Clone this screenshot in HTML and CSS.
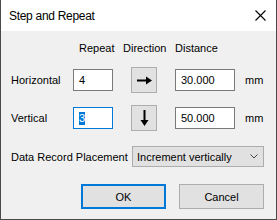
FILE: index.html
```html
<!DOCTYPE html>
<html>
<head>
<meta charset="utf-8">
<link rel="stylesheet" href="styles.css">
</head>
<body>
<div class="window">
  <div class="titlebar">
    <span class="title">Step and Repeat</span>
    <svg class="close" width="11" height="11" viewBox="0 0 11 11"><path d="M0.5 0.5L10.5 10.5M10.5 0.5L0.5 10.5" stroke="#000" stroke-width="1.1" fill="none"/></svg>
  </div>
  <div class="content">
    <div class="grid">
      <span></span>
      <span class="hdr hdr-repeat">Repeat</span>
      <span class="hdr hdr-dir">Direction</span>
      <span class="hdr">Distance</span>
      <span></span>

      <span class="label">Horizontal</span>
      <div class="field"><span>4</span></div>
      <div class="dirbtn"><svg width="15" height="9" viewBox="0 0 15 9"><path d="M0 3.5H9V0.5L15 4.5L9 8.5V5.5H0Z" fill="#000"/></svg></div>
      <div class="field wide"><span>30.000</span></div>
      <span class="unit">mm</span>

      <span class="label">Vertical</span>
      <div class="field focus"><span class="sel">3</span></div>
      <div class="dirbtn"><svg width="9" height="16" viewBox="0 0 9 16"><path d="M3.5 0V10H0.5L4.5 16L8.5 10H5.5V0Z" fill="#000"/></svg></div>
      <div class="field wide"><span>50.000</span></div>
      <span class="unit">mm</span>
    </div>
    <div class="placement">
      <span class="plabel">Data Record Placement</span>
      <div class="combo">
        <span>Increment vertically</span>
        <svg width="8" height="5" viewBox="0 0 8 5"><path d="M0.5 0.5L4 4L7.5 0.5" stroke="#444" stroke-width="1" fill="none"/></svg>
      </div>
    </div>
    <div class="actions">
      <div class="btn default">OK</div>
      <div class="btn">Cancel</div>
    </div>
  </div>
</div>
</body>
</html>
```
FILE: styles.css
```css
body {
  margin: 0;
}
.window {
  width: 277px;
  height: 220px;
  box-sizing: border-box;
  border: 1px solid #4a4a4a;
  border-top: 0;
  background: #f0f0f0;
  font-family: "Liberation Sans", Arial, sans-serif;
  font-size: 11px;
  color: #000;
  display: flex;
  flex-direction: column;
}
.titlebar {
  height: 31px;
  flex: none;
  background: #fff;
  display: flex;
  align-items: center;
  justify-content: space-between;
  padding: 0 10px 0 8px;
}
.title {
  font-family: "Liberation Sans", Arial, sans-serif;
  font-size: 12px;
  letter-spacing: -0.3px;
}
.content {
  padding: 11px 12px 0 10px;
}
.grid {
  display: grid;
  grid-template-columns: 62px 58px 44px 70px auto;
  grid-template-rows: 13px 26px 26px;
  row-gap: 12px;
  align-items: center;
  line-height: 13px;
}
.hdr {
  white-space: nowrap;
}
.hdr-repeat {
  margin-left: 6px;
}
.hdr-dir {
  margin-left: -8px;
}
.field {
  width: 40px;
  height: 22px;
  box-sizing: border-box;
  border: 1px solid #7a7a7a;
  background: #fff;
  padding-left: 5px;
  display: flex;
  align-items: center;
}
.field.wide {
  width: 60px;
}
.field.focus {
  border-color: #0078d7;
}
.sel {
  background: #0078d7;
  color: #fff;
}
.dirbtn {
  width: 26px;
  height: 26px;
  box-sizing: border-box;
  border: 1px solid #adadad;
  background: #e1e1e1;
  display: flex;
  align-items: center;
  justify-content: center;
}
.placement {
  margin-top: 15px;
  display: flex;
  align-items: center;
}
.plabel {
  width: 122px;
}
.combo {
  width: 133px;
  height: 21px;
  box-sizing: border-box;
  border: 1px solid #adadad;
  background: #e1e1e1;
  display: flex;
  align-items: center;
  justify-content: space-between;
  padding: 0 5px 0 4px;
}
.actions {
  margin-top: 17px;
  display: flex;
  justify-content: flex-end;
  gap: 13px;
}
.btn {
  width: 85px;
  height: 25px;
  box-sizing: border-box;
  border: 1px solid #adadad;
  background: #e1e1e1;
  display: flex;
  align-items: center;
  justify-content: center;
}
.btn.default {
  border: 2px solid #0078d7;
}
```
